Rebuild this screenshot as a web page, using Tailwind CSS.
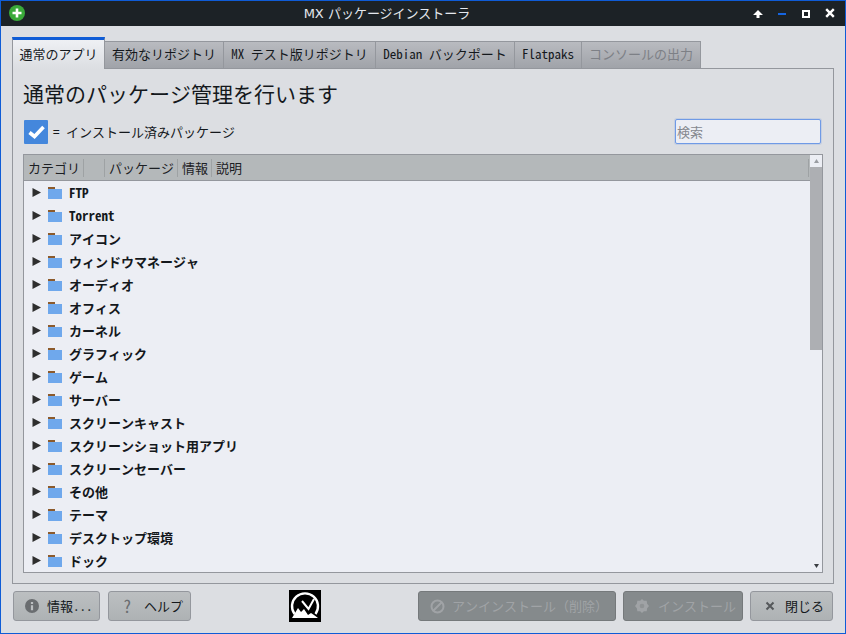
<!DOCTYPE html>
<html><head><meta charset="utf-8">
<script src="https://cdn.jsdelivr.net/npm/@tailwindcss/browser@4"></script>
</head>
<body class="m-0">
<div class="w-[846px] h-[634px] flex flex-col overflow-hidden border border-[#0f5cd6] bg-[#dcdee2] text-[#14181c] font-['Noto_Sans_Mono_CJK_JP','Noto_Sans_CJK_JP',monospace]">
  <!-- title bar -->
  <div class="h-[25px] shrink-0 bg-[#1c2226] relative flex items-center justify-center text-[#e4e8ee] text-[13px] pr-[72px] font-['DejaVu_Sans','Noto_Sans_CJK_JP',sans-serif]">
    <svg class="absolute left-[8px] top-[4px]" width="16" height="16" viewBox="0 0 16 16"><circle cx="8" cy="8" r="8" fill="#3aaa3a"/><path d="M8 3.5v9M3.5 8h9" stroke="#fff" stroke-width="2.6"/></svg>
    <span>MX パッケージインストーラ</span>
    <svg class="absolute right-[82px] top-[8px]" width="10" height="10" viewBox="0 0 10 10"><path d="M5 1 10 6H6.5V9H3.5V6H0Z" fill="#fff"/></svg>
    <div class="absolute right-[59px] top-[12px] w-[8px] h-[2px] bg-[#1565e0]"></div>
    <div class="absolute right-[35px] top-[9px] w-[8px] h-[8px] border-2 border-white"></div>
    <svg class="absolute right-[10px] top-[7px]" width="10" height="10" viewBox="0 0 10 10"><path d="M1.2 1.2 8.8 8.8M8.8 1.2 1.2 8.8" stroke="#fff" stroke-width="2.4"/></svg>
  </div>
  <!-- tabs + pane -->
  <div class="flex-1 flex flex-col px-[11px] pt-[11px] min-h-0">
    <div class="flex items-end h-[32px] shrink-0 text-[13px] -mb-px relative z-10">
      <div class="w-[93px] h-[32px] border-x border-[#94979d] border-t-[3px] border-t-[#0f5cd6] bg-gradient-to-b from-[#eef0f4] to-[#dcdee2] flex items-center justify-center pb-[2px]">通常のアプリ</div>
      <div class="w-[119px] h-[28px] border-t border-b border-r border-[#94979d] bg-gradient-to-b from-[#b9bbc0] to-[#a0a3a9] flex items-center justify-center pb-[2px]">有効なリポジトリ</div>
      <div class="w-[152px] h-[28px] border-t border-b border-r border-[#94979d] bg-gradient-to-b from-[#b9bbc0] to-[#a0a3a9] flex items-center justify-center pb-[2px]">MX テスト版リポジトリ</div>
      <div class="w-[139px] h-[28px] border-t border-b border-r border-[#94979d] bg-gradient-to-b from-[#b9bbc0] to-[#a0a3a9] flex items-center justify-center pb-[2px]">Debian バックポート</div>
      <div class="w-[67px] h-[28px] border-t border-b border-r border-[#94979d] bg-gradient-to-b from-[#b9bbc0] to-[#a0a3a9] flex items-center justify-center pb-[2px]">Flatpaks</div>
      <div class="w-[119px] h-[28px] border-t border-b border-r border-[#94979d] bg-gradient-to-b from-[#b9bbc0] to-[#a0a3a9] flex items-center justify-center pb-[2px] text-[#7d8086]">コンソールの出力</div>
    </div>
    <div class="h-[516px] shrink-0 border border-[#94979d] px-[10px] flex flex-col">
      <div class="text-[21px] leading-[26px] mt-[11px] h-[26px] whitespace-nowrap">通常のパッケージ管理を行います</div>
      <div class="flex items-center justify-between mt-[13px] h-[25px] pr-[2px]">
        <div class="flex items-center text-[13px]">
          <div class="w-[24px] h-[24px] ml-[1px] bg-[#4487dc] rounded-[1px] flex items-center justify-center">
            <svg width="17" height="14" viewBox="0 0 17 14"><path d="M1.5 7.5 6.5 11.5 15.5 2" fill="none" stroke="#fff" stroke-width="3.6"/></svg>
          </div>
          <span class="ml-[5px] whitespace-pre">= インストール済みパッケージ</span>
        </div>
        <div class="w-[146px] h-[25px] bg-[#eceef4] border border-[#6f9ae6] shadow-[0_0_0_1px_rgba(127,163,224,0.25)] rounded-[2px] text-[13px] text-[#85888e] flex items-center pl-[1px]">検索</div>
      </div>
      <!-- tree -->
      <div class="mt-[10px] h-[419px] border border-[#94979d] bg-[#eceef4] flex">
        <div class="flex-1 min-w-0 flex flex-col">
          <div class="h-[26px] shrink-0 bg-[#b4b8ba] border-b border-[#94979d] flex items-center text-[13px] text-[#1c2024]">
            <div class="w-[60px] pl-[4px] h-[18px] leading-[18px] border-r border-[#9ea2a4] whitespace-nowrap">カテゴリ</div>
            <div class="w-[21px] h-[18px] border-r border-[#9ea2a4]"></div>
            <div class="w-[73px] pl-[4px] h-[18px] leading-[18px] border-r border-[#9ea2a4] whitespace-nowrap">パッケージ</div>
            <div class="w-[34px] pl-[4px] h-[18px] leading-[18px] border-r border-[#9ea2a4] whitespace-nowrap">情報</div>
            <div class="pl-[4px] h-[18px] leading-[18px] whitespace-nowrap flex-1">説明</div>
            <div class="w-[1px] h-[18px] bg-[#9ea2a4] mr-[1px]"></div>
          </div>
          <div class="flex-1 overflow-hidden text-[13px] font-bold">
            <div class="h-[23px] flex items-center"><svg class="ml-[8px]" width="9" height="9" viewBox="0 0 9 9"><path d="M.5 0 9 4.5 .5 9Z" fill="#2e2e2e"/></svg><svg class="ml-[7px]" width="14" height="12" viewBox="0 0 14 12"><path d="M0 0h7v3H0Z" fill="#8c5a2b"/><path d="M0 2h14v10H0Z" fill="#6fa8ec"/></svg><span class="ml-[7px]">FTP</span></div>
            <div class="h-[23px] flex items-center"><svg class="ml-[8px]" width="9" height="9" viewBox="0 0 9 9"><path d="M.5 0 9 4.5 .5 9Z" fill="#2e2e2e"/></svg><svg class="ml-[7px]" width="14" height="12" viewBox="0 0 14 12"><path d="M0 0h7v3H0Z" fill="#8c5a2b"/><path d="M0 2h14v10H0Z" fill="#6fa8ec"/></svg><span class="ml-[7px]">Torrent</span></div>
            <div class="h-[23px] flex items-center"><svg class="ml-[8px]" width="9" height="9" viewBox="0 0 9 9"><path d="M.5 0 9 4.5 .5 9Z" fill="#2e2e2e"/></svg><svg class="ml-[7px]" width="14" height="12" viewBox="0 0 14 12"><path d="M0 0h7v3H0Z" fill="#8c5a2b"/><path d="M0 2h14v10H0Z" fill="#6fa8ec"/></svg><span class="ml-[7px]">アイコン</span></div>
            <div class="h-[23px] flex items-center"><svg class="ml-[8px]" width="9" height="9" viewBox="0 0 9 9"><path d="M.5 0 9 4.5 .5 9Z" fill="#2e2e2e"/></svg><svg class="ml-[7px]" width="14" height="12" viewBox="0 0 14 12"><path d="M0 0h7v3H0Z" fill="#8c5a2b"/><path d="M0 2h14v10H0Z" fill="#6fa8ec"/></svg><span class="ml-[7px]">ウィンドウマネージャ</span></div>
            <div class="h-[23px] flex items-center"><svg class="ml-[8px]" width="9" height="9" viewBox="0 0 9 9"><path d="M.5 0 9 4.5 .5 9Z" fill="#2e2e2e"/></svg><svg class="ml-[7px]" width="14" height="12" viewBox="0 0 14 12"><path d="M0 0h7v3H0Z" fill="#8c5a2b"/><path d="M0 2h14v10H0Z" fill="#6fa8ec"/></svg><span class="ml-[7px]">オーディオ</span></div>
            <div class="h-[23px] flex items-center"><svg class="ml-[8px]" width="9" height="9" viewBox="0 0 9 9"><path d="M.5 0 9 4.5 .5 9Z" fill="#2e2e2e"/></svg><svg class="ml-[7px]" width="14" height="12" viewBox="0 0 14 12"><path d="M0 0h7v3H0Z" fill="#8c5a2b"/><path d="M0 2h14v10H0Z" fill="#6fa8ec"/></svg><span class="ml-[7px]">オフィス</span></div>
            <div class="h-[23px] flex items-center"><svg class="ml-[8px]" width="9" height="9" viewBox="0 0 9 9"><path d="M.5 0 9 4.5 .5 9Z" fill="#2e2e2e"/></svg><svg class="ml-[7px]" width="14" height="12" viewBox="0 0 14 12"><path d="M0 0h7v3H0Z" fill="#8c5a2b"/><path d="M0 2h14v10H0Z" fill="#6fa8ec"/></svg><span class="ml-[7px]">カーネル</span></div>
            <div class="h-[23px] flex items-center"><svg class="ml-[8px]" width="9" height="9" viewBox="0 0 9 9"><path d="M.5 0 9 4.5 .5 9Z" fill="#2e2e2e"/></svg><svg class="ml-[7px]" width="14" height="12" viewBox="0 0 14 12"><path d="M0 0h7v3H0Z" fill="#8c5a2b"/><path d="M0 2h14v10H0Z" fill="#6fa8ec"/></svg><span class="ml-[7px]">グラフィック</span></div>
            <div class="h-[23px] flex items-center"><svg class="ml-[8px]" width="9" height="9" viewBox="0 0 9 9"><path d="M.5 0 9 4.5 .5 9Z" fill="#2e2e2e"/></svg><svg class="ml-[7px]" width="14" height="12" viewBox="0 0 14 12"><path d="M0 0h7v3H0Z" fill="#8c5a2b"/><path d="M0 2h14v10H0Z" fill="#6fa8ec"/></svg><span class="ml-[7px]">ゲーム</span></div>
            <div class="h-[23px] flex items-center"><svg class="ml-[8px]" width="9" height="9" viewBox="0 0 9 9"><path d="M.5 0 9 4.5 .5 9Z" fill="#2e2e2e"/></svg><svg class="ml-[7px]" width="14" height="12" viewBox="0 0 14 12"><path d="M0 0h7v3H0Z" fill="#8c5a2b"/><path d="M0 2h14v10H0Z" fill="#6fa8ec"/></svg><span class="ml-[7px]">サーバー</span></div>
            <div class="h-[23px] flex items-center"><svg class="ml-[8px]" width="9" height="9" viewBox="0 0 9 9"><path d="M.5 0 9 4.5 .5 9Z" fill="#2e2e2e"/></svg><svg class="ml-[7px]" width="14" height="12" viewBox="0 0 14 12"><path d="M0 0h7v3H0Z" fill="#8c5a2b"/><path d="M0 2h14v10H0Z" fill="#6fa8ec"/></svg><span class="ml-[7px]">スクリーンキャスト</span></div>
            <div class="h-[23px] flex items-center"><svg class="ml-[8px]" width="9" height="9" viewBox="0 0 9 9"><path d="M.5 0 9 4.5 .5 9Z" fill="#2e2e2e"/></svg><svg class="ml-[7px]" width="14" height="12" viewBox="0 0 14 12"><path d="M0 0h7v3H0Z" fill="#8c5a2b"/><path d="M0 2h14v10H0Z" fill="#6fa8ec"/></svg><span class="ml-[7px]">スクリーンショット用アプリ</span></div>
            <div class="h-[23px] flex items-center"><svg class="ml-[8px]" width="9" height="9" viewBox="0 0 9 9"><path d="M.5 0 9 4.5 .5 9Z" fill="#2e2e2e"/></svg><svg class="ml-[7px]" width="14" height="12" viewBox="0 0 14 12"><path d="M0 0h7v3H0Z" fill="#8c5a2b"/><path d="M0 2h14v10H0Z" fill="#6fa8ec"/></svg><span class="ml-[7px]">スクリーンセーバー</span></div>
            <div class="h-[23px] flex items-center"><svg class="ml-[8px]" width="9" height="9" viewBox="0 0 9 9"><path d="M.5 0 9 4.5 .5 9Z" fill="#2e2e2e"/></svg><svg class="ml-[7px]" width="14" height="12" viewBox="0 0 14 12"><path d="M0 0h7v3H0Z" fill="#8c5a2b"/><path d="M0 2h14v10H0Z" fill="#6fa8ec"/></svg><span class="ml-[7px]">その他</span></div>
            <div class="h-[23px] flex items-center"><svg class="ml-[8px]" width="9" height="9" viewBox="0 0 9 9"><path d="M.5 0 9 4.5 .5 9Z" fill="#2e2e2e"/></svg><svg class="ml-[7px]" width="14" height="12" viewBox="0 0 14 12"><path d="M0 0h7v3H0Z" fill="#8c5a2b"/><path d="M0 2h14v10H0Z" fill="#6fa8ec"/></svg><span class="ml-[7px]">テーマ</span></div>
            <div class="h-[23px] flex items-center"><svg class="ml-[8px]" width="9" height="9" viewBox="0 0 9 9"><path d="M.5 0 9 4.5 .5 9Z" fill="#2e2e2e"/></svg><svg class="ml-[7px]" width="14" height="12" viewBox="0 0 14 12"><path d="M0 0h7v3H0Z" fill="#8c5a2b"/><path d="M0 2h14v10H0Z" fill="#6fa8ec"/></svg><span class="ml-[7px]">デスクトップ環境</span></div>
            <div class="h-[23px] flex items-center"><svg class="ml-[8px]" width="9" height="9" viewBox="0 0 9 9"><path d="M.5 0 9 4.5 .5 9Z" fill="#2e2e2e"/></svg><svg class="ml-[7px]" width="14" height="12" viewBox="0 0 14 12"><path d="M0 0h7v3H0Z" fill="#8c5a2b"/><path d="M0 2h14v10H0Z" fill="#6fa8ec"/></svg><span class="ml-[7px]">ドック</span></div>
          </div>
        </div>
        <div class="w-[12px] shrink-0 bg-[#eceef4] flex flex-col">
          <div class="h-[12px] flex items-center justify-center"><svg width="5" height="4" viewBox="0 0 5 4"><path d="M2.5 0 5 4H0Z" fill="#9a9da2"/></svg></div>
          <div class="h-[183px] bg-[#adafb3]"></div>
          <div class="flex-1"></div>
          <div class="h-[12px] flex items-center justify-center"><svg width="5" height="4" viewBox="0 0 5 4"><path d="M0 0H5L2.5 4Z" fill="#3a3d42"/></svg></div>
        </div>
      </div>
    </div>
    <!-- buttons -->
    <div class="mt-[7px] flex items-start text-[13px] ml-[1px]">
      <div class="w-[87px] h-[30px] rounded-[3px] border border-[#94979d] bg-gradient-to-b from-[#bcbfc1] to-[#aeb2b4] flex items-center pl-[11px] gap-[8px]">
        <svg width="14" height="14" viewBox="0 0 14 14"><circle cx="7" cy="7" r="7" fill="#6a6d70"/><path d="M7 3v2M7 6.2v5" stroke="#bcbfc1" stroke-width="2.2"/></svg><span>情報...</span>
      </div>
      <div class="ml-[8px] w-[83px] h-[30px] rounded-[3px] border border-[#94979d] bg-gradient-to-b from-[#bcbfc1] to-[#aeb2b4] flex items-center pl-[14px] gap-[12px]">
        <span class="text-[#6a6d70] text-[17px] w-[9px]">?</span><span>ヘルプ</span>
      </div>
      <div class="ml-[98px] -mt-[1px] w-[32px] h-[32px] bg-black">
        <svg width="32" height="32" viewBox="0 0 32 32"><path d="M5.5 24A13 13 0 1 1 26.5 24" fill="none" stroke="#fff" stroke-width="2.4"/><path d="M3 28 9 18 12 22 15 19 19 25 22 23 25 25 29 28Z" fill="#fff"/><path d="M13 11 19.5 19 25 9" fill="none" stroke="#fff" stroke-width="2"/></svg>
      </div>
      <div class="ml-[97px] w-[198px] h-[30px] rounded-[3px] border border-[#75797b] bg-[#858a8c] text-[#a0a3a6] flex items-center pl-[11px] gap-[7px] whitespace-nowrap">
        <svg width="15" height="15" viewBox="0 0 15 15"><circle cx="7.5" cy="7.5" r="6" fill="none" stroke="#a0a3a6" stroke-width="2"/><path d="M3.5 11.5 11.5 3.5" stroke="#a0a3a6" stroke-width="2"/></svg><span>アンインストール（削除）</span>
      </div>
      <div class="ml-[7px] w-[120px] h-[30px] rounded-[3px] border border-[#75797b] bg-[#858a8c] text-[#a0a3a6] flex items-center pl-[11px] gap-[9px] whitespace-nowrap">
        <svg width="14" height="14" viewBox="0 0 15 15"><path d="M7.5 0 9.5 2 12.5 2 13 5 15 7.5 13 10 12.5 13 9.5 13 7.5 15 5.5 13 2.5 13 2 10 0 7.5 2 5 2.5 2 5.5 2Z" fill="#a0a3a6"/><circle cx="7.5" cy="7.5" r="2.5" fill="#8f9395"/></svg><span>インストール</span>
      </div>
      <div class="ml-[7px] w-[83px] h-[30px] rounded-[3px] border border-[#94979d] bg-gradient-to-b from-[#bcbfc1] to-[#aeb2b4] flex items-center pl-[14px] gap-[10px]">
        <svg width="10" height="10" viewBox="0 0 10 10"><path d="M1.5 1.5 8.5 8.5M8.5 1.5 1.5 8.5" stroke="#55585b" stroke-width="2"/></svg><span>閉じる</span>
      </div>
    </div>
  </div>
</div>
</body></html>
